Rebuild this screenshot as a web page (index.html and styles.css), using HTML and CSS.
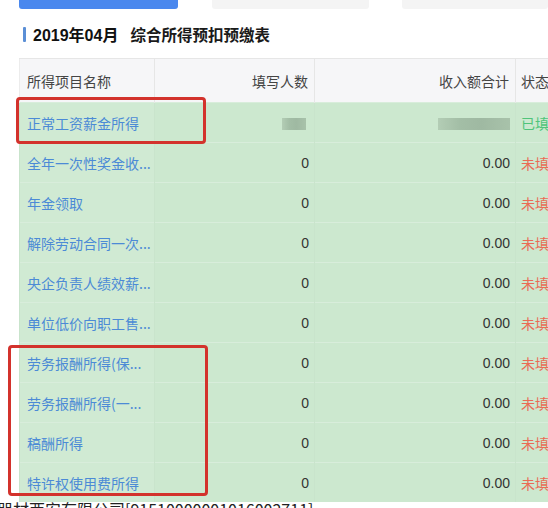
FILE: index.html
```html
<!DOCTYPE html>
<html lang="zh">
<head>
<meta charset="utf-8">
<title>综合所得预扣预缴表</title>
<link rel="stylesheet" href="styles.css">
</head>
<body>
<div class="page">
  <div class="tabs">
    <div class="tab tab-active"></div>
    <div class="tab tab-gray"></div>
    <div class="tab tab-gray tab-last"></div>
  </div>
  <div class="title">
    <span class="title-bar"></span>
    <span class="title-month">2019年04月</span>
    <span class="title-name">综合所得预扣预缴表</span>
  </div>
  <table class="grid">
    <colgroup>
      <col class="c-name"><col class="c-count"><col class="c-amount"><col class="c-status">
    </colgroup>
    <thead>
      <tr>
        <th class="name">所得项目名称</th>
        <th class="num">填写人数</th>
        <th class="num">收入额合计</th>
        <th class="status">状态</th>
      </tr>
    </thead>
    <tbody>
      <tr><td class="name"><a>正常工资薪金所得</a></td><td class="num"><span class="blur blur-s"></span></td><td class="num"><span class="blur blur-l"></span></td><td class="status done">已填</td></tr>
      <tr><td class="name"><a>全年一次性奖金收...</a></td><td class="num">0</td><td class="num">0.00</td><td class="status todo">未填</td></tr>
      <tr><td class="name"><a>年金领取</a></td><td class="num">0</td><td class="num">0.00</td><td class="status todo">未填</td></tr>
      <tr><td class="name"><a>解除劳动合同一次...</a></td><td class="num">0</td><td class="num">0.00</td><td class="status todo">未填</td></tr>
      <tr><td class="name"><a>央企负责人绩效薪...</a></td><td class="num">0</td><td class="num">0.00</td><td class="status todo">未填</td></tr>
      <tr><td class="name"><a>单位低价向职工售...</a></td><td class="num">0</td><td class="num">0.00</td><td class="status todo">未填</td></tr>
      <tr><td class="name"><a>劳务报酬所得(保...</a></td><td class="num">0</td><td class="num">0.00</td><td class="status todo">未填</td></tr>
      <tr><td class="name"><a>劳务报酬所得(一...</a></td><td class="num">0</td><td class="num">0.00</td><td class="status todo">未填</td></tr>
      <tr><td class="name"><a>稿酬所得</a></td><td class="num">0</td><td class="num">0.00</td><td class="status todo">未填</td></tr>
      <tr><td class="name"><a>特许权使用费所得</a></td><td class="num">0</td><td class="num">0.00</td><td class="status todo">未填</td></tr>
    </tbody>
  </table>
  <div class="footer-text">器材西安有限公司[91510000001016002711]</div>
  <div class="mark mark-1"></div>
  <div class="mark mark-2"></div>
</div>
</body>
</html>
```
FILE: styles.css
```css
html, body {
  margin: 0;
  padding: 0;
  background: #ffffff;
}
body {
  width: 548px;
  height: 508px;
  overflow: hidden;
  font-family: "Noto Sans CJK SC", "Liberation Sans", sans-serif;
}
.page {
  position: relative;
  width: 548px;
  height: 508px;
  overflow: hidden;
}
.tabs {
  display: flex;
  height: 9px;
  padding-left: 19px;
  gap: 34px;
}
.tab {
  height: 9px;
  border-radius: 0 0 3px 3px;
}
.tab-active {
  width: 159px;
  background: #4a88ee;
}
.tab-gray {
  width: 157px;
  background: #f4f4f4;
}
.tab-last {
  flex: 1;
  margin-left: -1px;
}
.title {
  display: flex;
  align-items: center;
  margin: 14px 0 0 23px;
  height: 22px;
}
.title-bar {
  width: 3px;
  height: 15px;
  background: #5b8fd6;
  border-radius: 1px;
  margin-right: 7px;
}
.title-month {
  font-family: "Liberation Sans", "Noto Sans CJK SC", sans-serif;
  font-weight: bold;
  font-size: 16px;
  color: #111;
}
.title-name {
  font-weight: bold;
  font-size: 15.5px;
  color: #1a1a1a;
  margin-left: 12px;
}
.grid {
  margin: 13px 0 0 19px;
  border-collapse: collapse;
  table-layout: fixed;
  width: 560px;
}
.c-name { width: 135px; }
.c-count { width: 160px; }
.c-amount { width: 201px; }
.c-status { width: 64px; }
.grid th {
  height: 43px;
  background: #f6f6f8;
  font-weight: normal;
  font-size: 14px;
  color: #444;
  border-top: 1px solid #e6e6e6;
  border-left: 1px solid #e6e6e6;
  padding: 0;
}
.grid th:first-child { border-left: 1px solid #ececec; }
.grid td {
  height: 39px;
  background: #cce8cf;
  border-top: 1px solid #d8eddb;
  border-left: 1px solid #c9e4cc;
  padding: 0;
  font-size: 14px;
  white-space: nowrap;
  overflow: hidden;
}
.grid td.name { background: #d0ead3; }
.grid .name {
  text-align: left;
  padding-left: 7px;
}
.grid .num {
  text-align: right;
  padding-right: 5px;
  font-family: "Liberation Sans", "Noto Sans CJK SC", sans-serif;
  color: #333;
}
.grid th.num { font-family: "Noto Sans CJK SC", sans-serif; color: #444; padding-right: 6px; }
.grid .status {
  text-align: left;
  padding-left: 5px;
}
.grid a {
  color: #4c8ad6;
  text-decoration: none;
}
.done { color: #4fc47a; }
.todo { color: #ea6b55; }
.blur {
  display: inline-block;
  height: 12px;
  vertical-align: middle;
  background: linear-gradient(90deg, #b3cdb5 0%, #a3bea6 30%, #9fb9a2 60%, #a8c2aa 100%);
  filter: blur(0.6px);
}
.blur-s { width: 24px; margin-right: 3px; }
.blur-l { width: 72px; }
.footer-text {
  position: absolute;
  left: -3px;
  top: 499px;
  font-size: 16px;
  line-height: 20px;
  color: #222;
  white-space: nowrap;
}
.mark {
  position: absolute;
  border: 3px solid #d3322c;
  border-radius: 4px;
  box-sizing: border-box;
}
.mark-1 {
  left: 16px;
  top: 97px;
  width: 190px;
  height: 47px;
}
.mark-2 {
  left: 8px;
  top: 345px;
  width: 200px;
  height: 151px;
}
```
